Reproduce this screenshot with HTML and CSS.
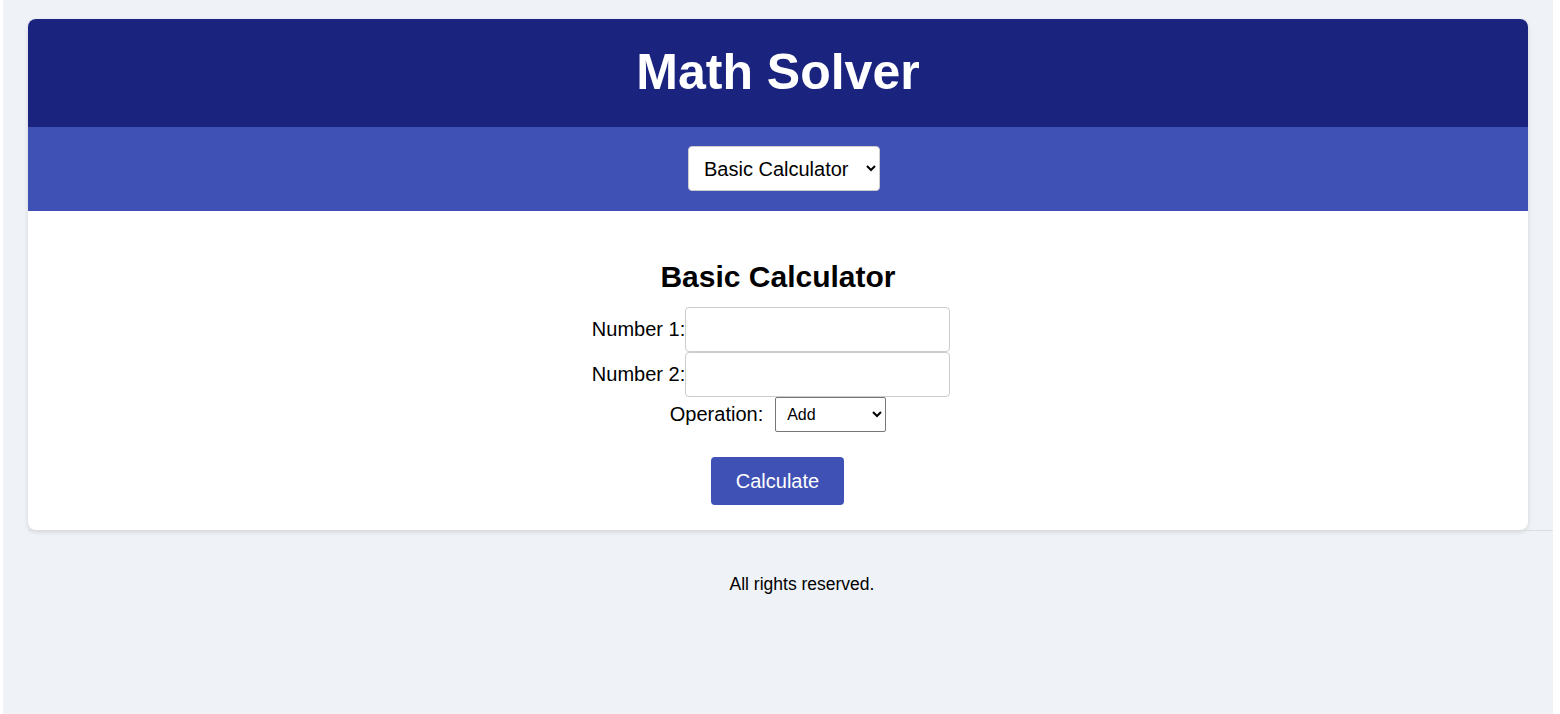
FILE: index.html
```html
<!DOCTYPE html>
<html lang="en">
<head>
<meta charset="utf-8">
<title>Math Solver</title>
<link rel="stylesheet" href="styles.css">
</head>
<body>
<div class="app">
  <header class="app-header">
    <h1 class="title">Math Solver</h1>
  </header>
  <nav class="app-nav">
    <select class="tool-select">
      <option>Basic Calculator</option>
      <option>Equation Solver</option>
    </select>
  </nav>
  <main class="app-main">
    <h2 class="section-title">Basic Calculator</h2>
    <div class="field-row">
      <label class="field-label">Number 1:</label>
      <input class="field-input" type="text">
    </div>
    <div class="field-row">
      <label class="field-label">Number 2:</label>
      <input class="field-input" type="text">
    </div>
    <div class="op-row">
      <label class="field-label">Operation:</label>
      <select class="op-select">
        <option>Add</option>
        <option>Subtract</option>
        <option>Multiply</option>
        <option>Divide</option>
      </select>
    </div>
    <button class="calc-btn">Calculate</button>
  </main>
</div>
<footer class="app-footer">All rights reserved.</footer>
</body>
</html>
```

FILE: styles.css
```css
html {
  background: #ffffff;
  overflow: hidden;
}

body {
  margin: 0 7px 0 3px;
  padding: 19px 25px 0 25px;
  min-height: 714px;
  box-sizing: border-box;
  background: #eff2f7;
  font-family: "Liberation Sans", Arial, sans-serif;
  color: #000;
}

.app {
  background: #ffffff;
  border-radius: 8px;
  overflow: hidden;
  box-shadow: 0 2px 5px rgba(0, 0, 0, 0.12);
}

.app-header {
  background: #1a237e;
  height: 108px;
  display: flex;
  align-items: center;
  justify-content: center;
}

.title {
  margin: 0;
  color: #ffffff;
  font-size: 50px;
  font-weight: bold;
  line-height: 1;
  padding-bottom: 2px;
}

.app-nav {
  background: #3f51b5;
  height: 84px;
  display: flex;
  align-items: center;
  justify-content: center;
  padding-bottom: 1px;
  box-sizing: border-box;
}

.tool-select {
  height: 45px;
  width: 192px;
  margin-left: 12px;
  padding: 0 8px 0 11px;
  font-family: "Liberation Sans", Arial, sans-serif;
  font-size: 20px;
  border: 1px solid #cccccc;
  border-radius: 4px;
  background: #ffffff;
  color: #000;
}

.app-main {
  display: flex;
  flex-direction: column;
  align-items: center;
  padding: 49px 20px 25px;
}

.section-title {
  margin: 0 0 13px;
  font-size: 30px;
  font-weight: bold;
  line-height: 34px;
}

.field-row {
  display: flex;
  align-items: center;
  font-size: 20px;
}

.field-input {
  width: 265px;
  height: 45px;
  box-sizing: border-box;
  border: 1px solid #cccccc;
  border-radius: 4px;
  margin: 0 14px 0 0;
  padding: 8px;
  font-size: 16px;
}

.op-row {
  display: flex;
  align-items: center;
  gap: 12px;
  font-size: 20px;
  margin-bottom: 25px;
}

.op-select {
  width: 111px;
  height: 35px;
  padding: 0 4px 0 7px;
  font-family: "Liberation Sans", Arial, sans-serif;
  font-size: 16px;
  border: 1px solid #767676;
  border-radius: 2px;
  background: #ffffff;
  color: #000;
}

.calc-btn {
  width: 133px;
  height: 48px;
  margin-right: 1px;
  background: #3f51b5;
  color: #ffffff;
  border: none;
  border-radius: 4px;
  font-family: "Liberation Sans", Arial, sans-serif;
  font-size: 20px;
  cursor: pointer;
}

.app-footer {
  margin: 0 -48px 0 0;
  border-top: 1px solid #dddddd;
  padding: 43px 0 0;
  text-align: center;
  font-size: 17.5px;
  line-height: 20px;
}
```
